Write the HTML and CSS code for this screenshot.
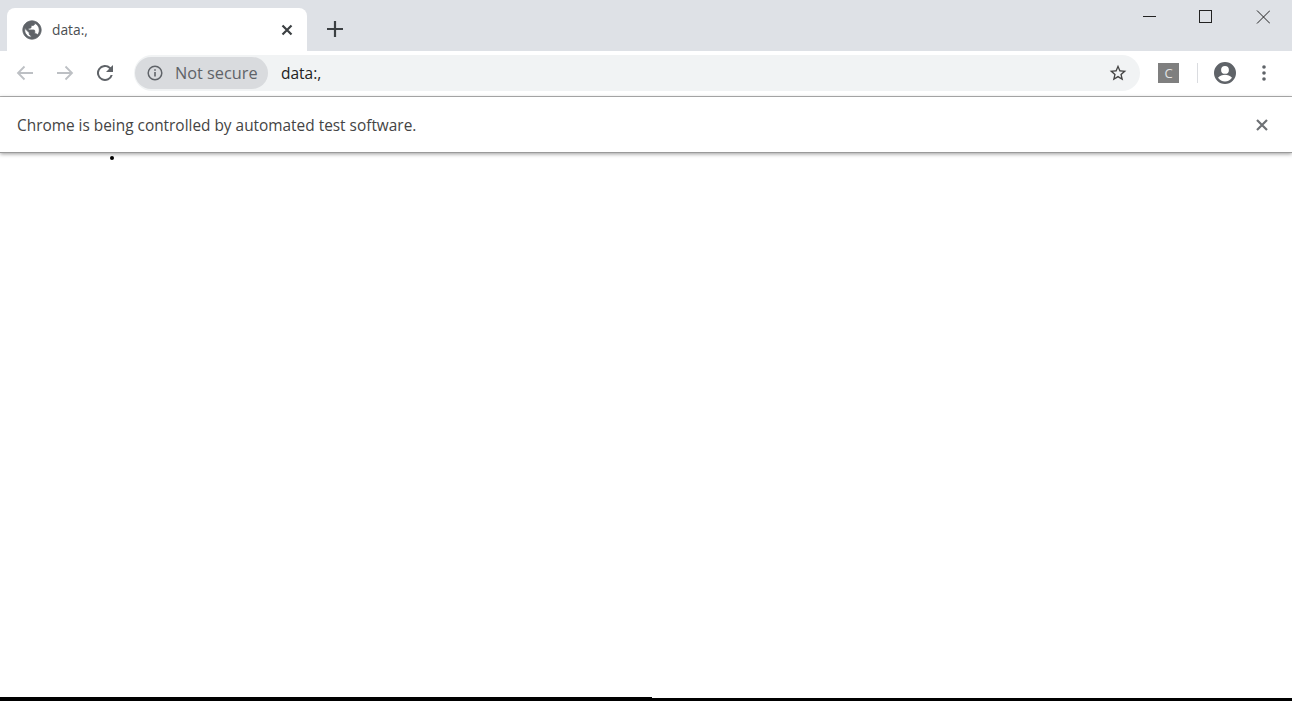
FILE: index.html
```html
<!DOCTYPE html>
<html lang="en">
<head>
<meta charset="utf-8">
<title>data:,</title>
<link rel="stylesheet" href="styles.css">
</head>
<body>
<div class="window">
  <header class="tabstrip">
    <div class="tab">
      <svg class="globe" width="22" height="22" viewBox="0 0 24 24"><path fill="#5f6368" stroke="#5f6368" stroke-width=".9" d="M12 2C6.480 2 2 6.480 2 12s4.480 10 10 10 10-4.480 10-10S17.520 2 12 2zm-1 17.930c-3.950-.49-7-3.850-7-7.930 0-.62.08-1.210.21-1.790L9 15v1c0 1.100.9 2 2 2v1.930zm6.900-2.540c-.26-.81-1-1.390-1.900-1.390h-1v-3c0-.55-.45-1-1-1H8v-2h2c.55 0 1-.45 1-1V7h2c1.100 0 2-.9 2-2v-.41c2.930 1.190 5 4.060 5 7.410 0 2.080-.8 3.970-2.100 5.390z"/></svg>
      <span class="tab-title">data:,</span>
      <svg class="tab-close" width="12" height="12" viewBox="0 0 12 12"><path d="M1.500 1.500l9 9M10.500 1.500l-9 9" stroke="#3c4043" stroke-width="2.200" fill="none"/></svg>
    </div>
    <svg class="new-tab" width="16" height="16" viewBox="0 0 16 16"><path d="M8 0v16M0 8h16" stroke="#3c4043" stroke-width="2.200" fill="none"/></svg>
    <div class="window-controls">
      <svg width="14" height="14" viewBox="0 0 14 14"><path d="M1 6.500h13" stroke="#222" fill="none"/></svg>
      <svg width="14" height="14" viewBox="0 0 14 14"><rect x=".5" y=".5" width="12" height="12" stroke="#222" fill="none"/></svg>
      <svg width="14" height="14" viewBox="0 0 14 14"><path d="M1 .5l13 13M14 .5l-13 13" stroke="#222" fill="none"/></svg>
    </div>
  </header>

  <nav class="toolbar">
    <svg class="nav-icon" width="18" height="16" viewBox="0 0 18 16"><path d="M17 8H2M8.500 1.500L2 8l6.500 6.500" stroke="#bdc0c4" stroke-width="1.800" fill="none"/></svg>
    <svg class="nav-icon" width="18" height="16" viewBox="0 0 18 16"><path d="M1 8h15M9.500 1.500L16 8l-6.500 6.500" stroke="#bdc0c4" stroke-width="1.800" fill="none"/></svg>
    <svg class="nav-icon" width="24" height="24" viewBox="0 0 24 24"><path fill="#5f6368" d="M17.650 6.350A8 8 0 1 0 19.730 14h-2.080A6 6 0 1 1 12 6c1.660 0 3.140.69 4.220 1.780L13 11h7V4l-2.350 2.350z"/></svg>
    <div class="omnibox">
      <div class="chip">
        <svg width="16" height="16" viewBox="0 0 16 16"><circle cx="8" cy="8" r="6.800" stroke="#5f6368" stroke-width="1.500" fill="none"/><path d="M8 7v4.500" stroke="#5f6368" stroke-width="1.600"/><path d="M8 4.200v1.600" stroke="#5f6368" stroke-width="1.600"/></svg>
        <span>Not secure</span>
      </div>
      <span class="url">data:,</span>
      <svg class="star" width="20" height="20" viewBox="0 0 24 24"><path fill="#444" d="M22 9.240l-7.190-.62L12 2 9.190 8.630 2 9.240l5.460 4.730L5.820 21 12 17.270 18.180 21l-1.630-7.030L22 9.240zM12 15.400l-3.760 2.270 1-4.280-3.320-2.880 4.380-.38L12 6.100l1.710 4.040 4.380.38-3.320 2.880 1 4.280L12 15.400z"/></svg>
    </div>
    <div class="ext">C</div>
    <div class="divider"></div>
    <svg class="avatar" width="24" height="24" viewBox="0 0 24 24"><path fill="#5f6368" d="M12 1a11 11 0 1 0 0 22 11 11 0 0 0 0-22zm0 4a3.900 3.900 0 1 1 0 7.800A3.900 3.900 0 0 1 12 5zm0 15.500a8.500 8.500 0 0 1-7-3.700c1.400-2 4.700-3 7-3s5.600 1 7 3a8.500 8.500 0 0 1-7 3.700z"/></svg>
    <svg class="menu" width="4" height="16" viewBox="0 0 4 16"><circle cx="2" cy="2" r="1.800" fill="#5f6368"/><circle cx="2" cy="8" r="1.800" fill="#5f6368"/><circle cx="2" cy="14" r="1.800" fill="#5f6368"/></svg>
  </nav>

  <div class="infobar">
    <span class="infobar-text">Chrome is being controlled by automated test software.</span>
    <svg width="12" height="12" viewBox="0 0 12 12"><path d="M1 1l10 10M11 1L1 11" stroke="#6e7175" stroke-width="2.200" fill="none"/></svg>
  </div>

  <main class="page"><div class="dot"></div></main>

  <footer class="edge"><div class="edge-left"></div></footer>
</div>
</body>
</html>
```

FILE: styles.css
```css
* { box-sizing: border-box; }
html, body { margin: 0; height: 100%; background: #fff; overflow: hidden; }
.window {
  width: 1292px;
  height: 701px;
  display: flex;
  flex-direction: column;
  font-family: "Open Sans", "Noto Sans", sans-serif;
}
.tabstrip {
  height: 51px;
  flex: none;
  background: #dee1e6;
  display: flex;
  align-items: flex-start;
  padding: 8px 0 0 7px;
  position: relative;
}
.tab {
  width: 300px;
  height: 43px;
  background: #fff;
  border-radius: 8px 8px 0 0;
  display: flex;
  align-items: center;
  padding: 0 14px 0 14px;
}
.globe { flex: none; margin-top: 1px; }
.tab-title { flex: 1; margin-left: 9px; font-size: 13.800px; color: #4a4d51; }
.tab-close { flex: none; margin-top: 1px; }
.new-tab { flex: none; margin: 13px 0 0 20px; }
.window-controls {
  margin-left: auto;
  display: flex;
  gap: 43px;
  padding-right: 22px;
  margin-top: 2px;
}
.toolbar {
  height: 46px;
  flex: none;
  background: #fff;
  border-bottom: 1px solid #b4b4b4;
  display: flex;
  align-items: center;
  padding: 0 0 2px 16px;
}
.nav-icon { flex: none; }
.nav-icon:nth-child(2) { margin-left: 22px; }
.nav-icon:nth-child(3) { margin-left: 19px; }
.omnibox {
  margin-left: 17px;
  width: 1006px;
  height: 36px;
  border-radius: 18px;
  background: #f1f3f4;
  display: flex;
  align-items: center;
  padding-right: 12px;
}
.chip {
  height: 32px;
  margin-left: 1px;
  width: 133px;
  flex: none;
  border-radius: 16px;
  background: #d9dbde;
  display: flex;
  align-items: center;
  padding-left: 12px;
  gap: 12px;
  font-size: 16.300px;
  color: #5f6368;
  white-space: nowrap;
}
.url { flex: 1; margin-left: 13px; font-size: 15.500px; color: #222; }
.star { flex: none; }
.ext {
  flex: none;
  margin-left: 18px;
  width: 21px;
  height: 20px;
  background: #7f7f7f;
  color: #e4e4e4;
  font-size: 13px;
  line-height: 20px;
  text-align: center;
}
.divider { flex: none; width: 1px; height: 20px; background: #dadce0; margin-left: 18px; }
.avatar { flex: none; margin-left: 15px; }
.menu { flex: none; margin-left: 25px; }
.infobar {
  height: 56px;
  flex: none;
  background: #fff;
  border-bottom: 1px solid #9a9a9a;
  box-shadow: 0 1px 4px rgba(0,0,0,.4);
  display: flex;
  align-items: center;
  justify-content: space-between;
  padding: 0 24px 0 17px;
  font-size: 15.400px;
  color: #444;
  position: relative;
  z-index: 1;
}
.infobar-text { margin-top: 1px; }
.page { flex: 1; background: #fff; position: relative; }
.dot {
  position: absolute;
  left: 110px;
  top: 3px;
  width: 4px;
  height: 4px;
  background: #000;
  border-radius: 50%;
}
.edge { height: 3px; flex: none; background: #000; margin-top: 1px; position: relative; }
.edge-left { position: absolute; left: 0; bottom: 3px; width: 652px; height: 1px; background: #000; }
```
